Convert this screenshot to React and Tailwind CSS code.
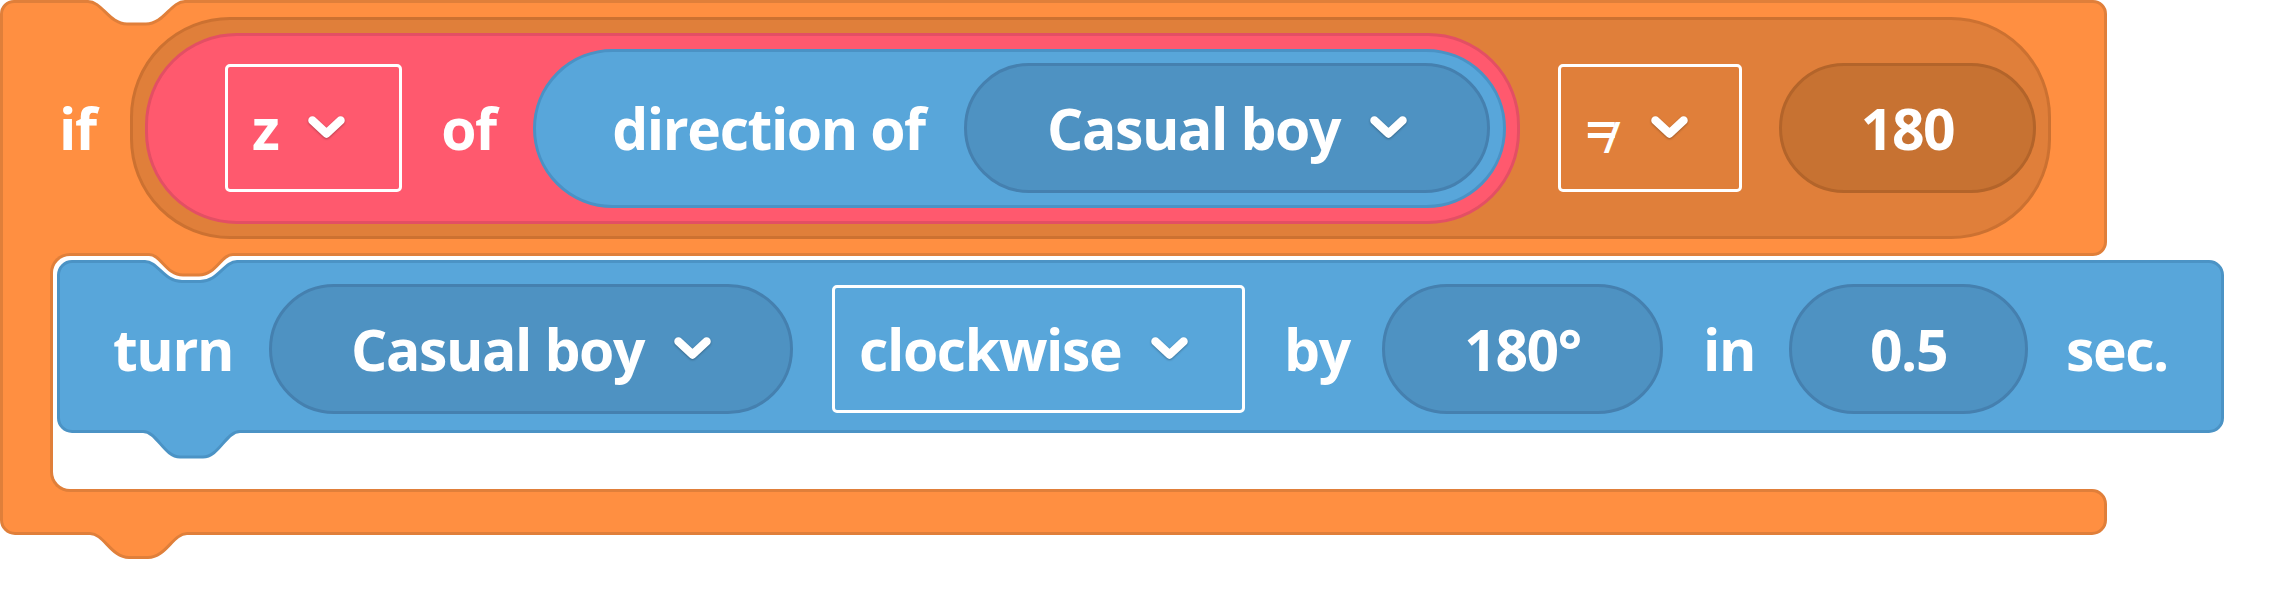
function Chevron() {
  return (
    <svg width="37" height="24" viewBox="0 0 37 24" className="shrink-0 drop-shadow-[0_1px_1px_rgba(0,0,0,0.3)]">
      <path d="M4.5 4.5L18.5 17.5L32.5 4.5" fill="none" stroke="white" strokeWidth="8.5" strokeLinecap="round" strokeLinejoin="round" />
    </svg>
  )
}

function Pill({ className, children }) {
  return (
    <div className={`flex h-[130px] shrink-0 items-center justify-center gap-[30px] rounded-full border-[3px] ${className}`}>
      {children}
    </div>
  )
}

function Dropdown({ className, children }) {
  return (
    <div className={`flex h-[128px] shrink-0 items-center gap-[30px] rounded-[5px] border-[3px] border-white pl-[24px] ${className}`}>
      {children}
      <Chevron />
    </div>
  )
}

function Word({ className, children }) {
  return <span className={`shrink-0 whitespace-nowrap text-center ${className}`}>{children}</span>
}

export default function App() {
  return (
    <div className="h-[592px] w-full bg-white font-['Open_Sans',sans-serif] text-[57px] font-bold leading-none tracking-[-1.4px] text-white">
      <div className="relative flex w-[2107px] flex-col">
        {/* top arm: if <condition> */}
        <div className="flex h-[256px] items-center rounded-[14px] rounded-bl-none border-[3px] border-[#e07f3a] bg-[#ff8f41]">
          <Word className="ml-[56px] w-[33px]">if</Word>
          <div className="ml-[38px] flex h-[222px] w-[1921px] shrink-0 items-center rounded-[100px] border-[3px] border-[#cc7131] bg-[#e07f3a]">
            <div className="ml-[12px] flex h-[191px] w-[1375px] shrink-0 items-center rounded-[92px] border-[3px] border-[#e34f64] bg-[#ff596e]">
              <Dropdown className="ml-[77px] w-[177px]">
                <span>z</span>
              </Dropdown>
              <Word className="ml-[39px] w-[55px]">of</Word>
              <div className="ml-[37px] flex h-[159px] w-[973px] shrink-0 items-center rounded-[80px] border-[3px] border-[#4a92c5] bg-[#58a6da]">
                <Word className="ml-[76px] w-[313px]">direction of</Word>
                <Pill className="ml-[39px] w-[526px] border-[#4580af] bg-[#4e92c2]">
                  <span>Casual boy</span>
                  <Chevron />
                </Pill>
              </div>
            </div>
            <Dropdown className="ml-[38px] w-[184px]">
              <span className="flex items-baseline font-semibold tracking-normal">
                <span>=</span>
                <span className="relative top-[3px] -ml-[14px] text-[44px]">/</span>
              </span>
            </Dropdown>
            <Pill className="ml-[37px] w-[257px] border-[#b3642a] bg-[#c77232]">
              <span>180</span>
            </Pill>
          </div>
        </div>

        {/* mouth of the C */}
        <div className="flex h-[233px]">
          <div className="relative -my-[3px] w-[70px] shrink-0 border-l-[3px] border-[#e07f3a] bg-[#ff8f41]" />
          <div className="relative -my-[3px] -ml-[20px] mr-[15px] min-w-0 flex-1 rounded-l-[20px] border-y-[3px] border-l-[3px] border-[#e07f3a] bg-white pl-[4px] pt-[4px]">
            {/* turn block */}
            <div className="flex h-[173px] w-[2167px] items-center rounded-[15px] border-[3px] border-[#4b93c5] bg-[#58a6da] pt-[5px]">
              <Word className="ml-[53px] w-[117px]">turn</Word>
              <Pill className="ml-[39px] w-[524px] border-[#4580af] bg-[#4e92c2]">
                <span>Casual boy</span>
                <Chevron />
              </Pill>
              <Dropdown className="ml-[39px] w-[413px]">
                <span>clockwise</span>
              </Dropdown>
              <Word className="ml-[39px] w-[63px]">by</Word>
              <Pill className="ml-[35px] w-[281px] border-[#4580af] bg-[#4e92c2]">
                <span>180°</span>
              </Pill>
              <Word className="ml-[40px] w-[45px]">in</Word>
              <Pill className="ml-[41px] w-[239px] border-[#4580af] bg-[#4e92c2]">
                <span>0.5</span>
              </Pill>
              <Word className="ml-[38px] w-[101px]">sec.</Word>
            </div>
          </div>
        </div>

        {/* bottom arm */}
        <div className="h-[46px] rounded-[15px] rounded-tl-none border-[3px] border-[#e07f3a] bg-[#ff8f41]" />

        {/* notch at the top of the if block */}
        <svg className="absolute left-[80px] top-0" width="113" height="30" viewBox="80 0 113 30">
          <path d="M80 0L193 0L193 1.5L185 1.5C171 1.5 164 24 146 24L127 24C109 24 102 1.5 88 1.5L80 1.5Z" fill="white" />
          <path d="M80 1.5L88 1.5C102 1.5 109 24 127 24L146 24C164 24 171 1.5 185 1.5L193 1.5" fill="none" stroke="#e07f3a" strokeWidth="3" />
        </svg>

        {/* tab under the if block */}
        <svg className="absolute left-[80px] top-[528px]" width="113" height="34" viewBox="80 528 113 34">
          <path d="M80 528L80 533.5L90 533.5C104 533.5 111 557.5 129 557.5L148 557.5C166 557.5 173 533.5 187 533.5L193 533.5L193 528Z" fill="#ff8f41" />
          <path d="M80 533.5L90 533.5C104 533.5 111 557.5 129 557.5L148 557.5C166 557.5 173 533.5 187 533.5L193 533.5" fill="none" stroke="#e07f3a" strokeWidth="3" />
        </svg>

        {/* inner tab of the C sitting in the turn block's notch */}
        <svg className="absolute left-[136px] top-[248px]" width="108" height="38" viewBox="136 248 108 38">
          <path d="M136 254L136 261.5L145 261.5C158 261.5 164 281.5 182 281.5L200 281.5C218 281.5 224 261.5 237 261.5L244 261.5L244 254Z" fill="white" />
          <path d="M136 248L136 254.5L149 254.5C161 254.5 166 275 183 275L199 275C216 275 221 254.5 233 254.5L244 254.5L244 248Z" fill="#ff8f41" />
          <path d="M136 254.5L149 254.5C161 254.5 166 275 183 275L199 275C216 275 221 254.5 233 254.5L244 254.5" fill="none" stroke="#e07f3a" strokeWidth="3" />
          <path d="M136 261.5L145 261.5C158 261.5 164 281.5 182 281.5L200 281.5C218 281.5 224 261.5 237 261.5L244 261.5" fill="none" stroke="#4b93c5" strokeWidth="3" />
        </svg>

        {/* tab under the turn block */}
        <svg className="absolute left-[132px] top-[426px]" width="118" height="36" viewBox="132 426 118 36">
          <path d="M132 426L132 431.5L143 431.5C157 431.5 164 457 180 457L203 457C219 457 226 431.5 240 431.5L250 431.5L250 426Z" fill="#58a6da" />
          <path d="M132 431.5L143 431.5C157 431.5 164 457 180 457L203 457C219 457 226 431.5 240 431.5L250 431.5" fill="none" stroke="#4b93c5" strokeWidth="3" />
        </svg>
      </div>
    </div>
  )
}
